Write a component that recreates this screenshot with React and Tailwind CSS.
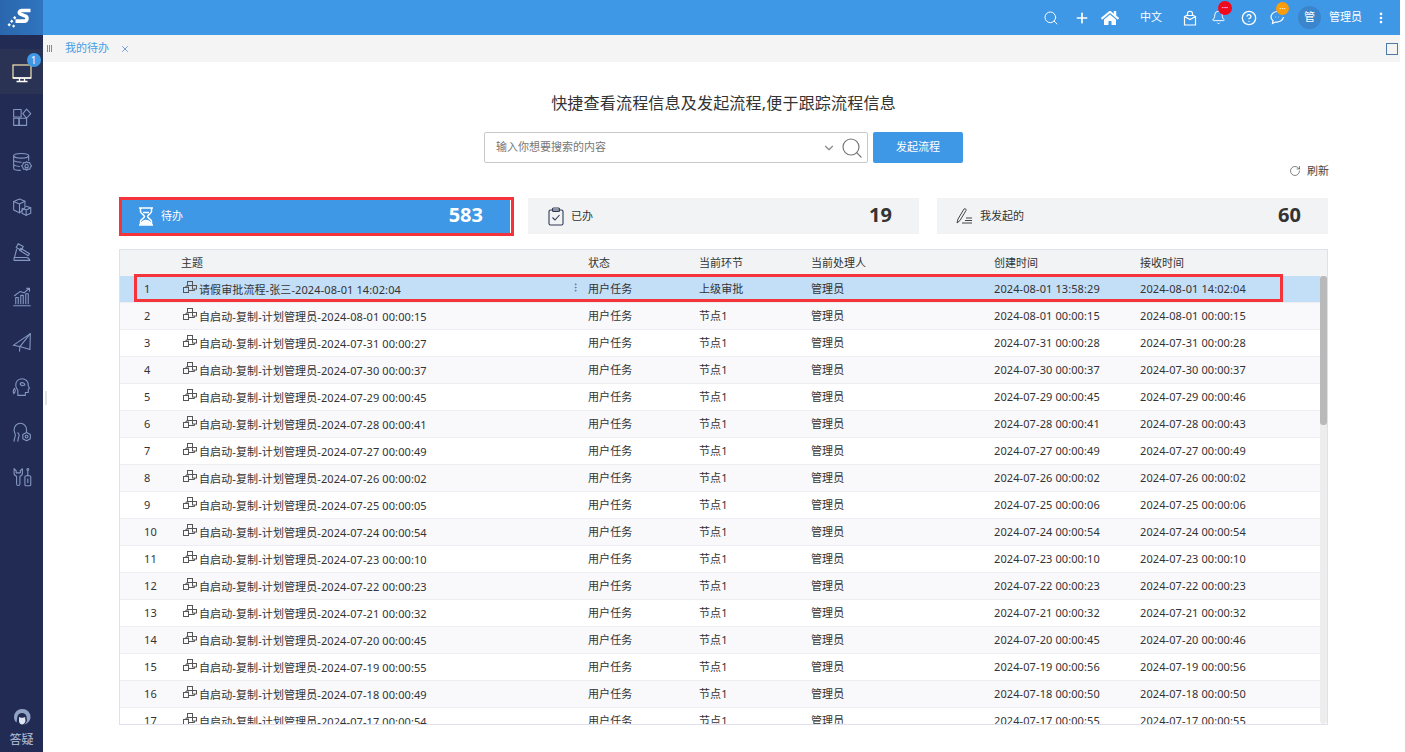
import { Search, Plus, Bell, CircleHelp, RotateCw, ChevronDown, EllipsisVertical, X } from "lucide-react";
import { FaHome } from "react-icons/fa";

const rows = [
	[1, "请假审批流程-张三-2024-08-01 14:02:04", "上级审批", "2024-08-01 13:58:29", "2024-08-01 14:02:04"],
	[2, "自启动-复制-计划管理员-2024-08-01 00:00:15", "节点1", "2024-08-01 00:00:15", "2024-08-01 00:00:15"],
	[3, "自启动-复制-计划管理员-2024-07-31 00:00:27", "节点1", "2024-07-31 00:00:28", "2024-07-31 00:00:28"],
	[4, "自启动-复制-计划管理员-2024-07-30 00:00:37", "节点1", "2024-07-30 00:00:37", "2024-07-30 00:00:37"],
	[5, "自启动-复制-计划管理员-2024-07-29 00:00:45", "节点1", "2024-07-29 00:00:45", "2024-07-29 00:00:46"],
	[6, "自启动-复制-计划管理员-2024-07-28 00:00:41", "节点1", "2024-07-28 00:00:41", "2024-07-28 00:00:43"],
	[7, "自启动-复制-计划管理员-2024-07-27 00:00:49", "节点1", "2024-07-27 00:00:49", "2024-07-27 00:00:49"],
	[8, "自启动-复制-计划管理员-2024-07-26 00:00:02", "节点1", "2024-07-26 00:00:02", "2024-07-26 00:00:02"],
	[9, "自启动-复制-计划管理员-2024-07-25 00:00:05", "节点1", "2024-07-25 00:00:06", "2024-07-25 00:00:06"],
	[10, "自启动-复制-计划管理员-2024-07-24 00:00:54", "节点1", "2024-07-24 00:00:54", "2024-07-24 00:00:54"],
	[11, "自启动-复制-计划管理员-2024-07-23 00:00:10", "节点1", "2024-07-23 00:00:10", "2024-07-23 00:00:10"],
	[12, "自启动-复制-计划管理员-2024-07-22 00:00:23", "节点1", "2024-07-22 00:00:23", "2024-07-22 00:00:23"],
	[13, "自启动-复制-计划管理员-2024-07-21 00:00:32", "节点1", "2024-07-21 00:00:32", "2024-07-21 00:00:32"],
	[14, "自启动-复制-计划管理员-2024-07-20 00:00:45", "节点1", "2024-07-20 00:00:45", "2024-07-20 00:00:46"],
	[15, "自启动-复制-计划管理员-2024-07-19 00:00:55", "节点1", "2024-07-19 00:00:56", "2024-07-19 00:00:56"],
	[16, "自启动-复制-计划管理员-2024-07-18 00:00:49", "节点1", "2024-07-18 00:00:50", "2024-07-18 00:00:50"],
	[17, "自启动-复制-计划管理员-2024-07-17 00:00:54", "节点1", "2024-07-17 00:00:55", "2024-07-17 00:00:55"],
];

const navIcons = [
	<g>
		<rect x="2" y="3" width="9" height="9" />
		<rect x="2" y="13.500" width="6.500" height="8.500" />
		<rect x="8.500" y="13.500" width="9" height="8.500" />
		<path d="M17.500 2.500l5 5.500-5 5.500-4.500-5.500z" />
	</g>,
	<g>
		<ellipse cx="11" cy="4.500" rx="9" ry="2.800" />
		<path d="M2 4.500v15c0 1.500 3.500 2.500 8 2.500M20 4.500v5.500M2 10c1.500 1.500 5 2.200 9 2.200M2 15.500c1.500 1 4 1.600 7 1.800" />
		<circle cx="17.500" cy="17" r="2" />
		<path d="M17.500 11.500l1.500 1.500 2.300-.3.700 2.300 1.500 1.700-1.500 1.700-.7 2.300-2.300-.3-1.500 1.500-1.500-1.500-2.300.3-.7-2.300-1.500-1.700 1.500-1.700.7-2.300 2.300.3z" />
	</g>,
	<g>
		<path d="M9 2.500l6.500 2.500v8l-6.500 6-7-3.500v-10z" />
		<path d="M2 5.500l7 3 6.500-3.500M9 8.500v10.500" />
		<path d="M17 11l5.500 2v6.500l-5.500 2.500-5-2.500v-4.500" />
		<path d="M12 13.500l5 2 5.500-2.500M17 15.500v6.500" />
	</g>,
	<g>
		<path d="M7.500 2l6 3.500-2.500 4.500-6-3.500z" />
		<path d="M10.500 7.500l10.500 6.500-1.500 2.500-10.500-6.500z" />
		<path d="M5.500 9l-2.500 9.500" />
		<path d="M2.500 22v-3.500h15c2 0 3 1 4 3.500z" />
	</g>,
	<g>
		<path d="M2 22.500h20M4.500 20v-7.500h3v7.500M10.500 20v-10h3v10M16.500 20v-12h3v12" />
		<path d="M3 10.500l6.500-5 5 1.500 6-5.500M17.500 1.500h3.500v3.500" />
	</g>,
	<g>
		<path d="M22 2l-20.500 14 8 1.500 12 3.500z" />
		<path d="M22 2l-12.500 15.500-.5 5.500" />
	</g>,
	<g>
		<path d="M7 22h9v-3.500h3.500v-4l1.500-1c-.5-1-1-2-1.500-3 .5-5-3.200-8.500-7.500-8.500-5.500 0-8 4.500-7.500 8.500.2 2 1.500 4 2.500 5.500z" />
		<path d="M10 7.500c2-1.500 5-.5 5.500 2l-3.500 1-2-1.500z" />
		<path d="M3 13.500c-1.300 1.500-2 4-.8 6.500 1.500-1.500 2.200-4 .8-6.500z" />
	</g>,
	<g>
		<path d="M2.500 23c0-3 1.500-4.500 1.500-7.500 0-2-1.500-3-1.500-6 0-4.500 3.500-8 7.500-8s7.500 3.500 7.500 8c0 1 0 1.500-.3 2.500" />
		<path d="M7 23c0-3 1.500-4.500 1.500-7.500 0-1-1-1.500-1.500-2.500" />
		<path d="M17.500 12.500l4.500 2.500v5l-4.500 2.500-4.500-2.500v-5z" />
		<circle cx="17.500" cy="17.500" r="1.700" />
	</g>,
	<g>
		<path d="M2.500 2v5.500c0 1.700 1.200 3 3 3.500v9c0 3 4 3 4 0v-9c1.800-.5 3-1.800 3-3.500v-5.500l-2.500 2.500v2.500h-5v-2.500z" />
		<rect x="15.500" y="10.500" width="7" height="12" rx="1.300" />
		<path d="M19 10.500v-6M19 14.500v4" />
		<circle cx="19" cy="3" r="1.100" />
	</g>,
];

function NavIcon({ children }) {
	return (
		<div className="flex h-[45px] items-center justify-center">
			<svg width="20" height="20" viewBox="0 0 24 24" fill="none" stroke="#8599c0" strokeWidth="1.300" strokeLinejoin="round" strokeLinecap="round">
				{children}
			</svg>
		</div>
	);
}

function FlowIcon() {
	return (
		<svg width="14" height="13" viewBox="0 0 14 13" fill="none" stroke="#555" strokeWidth="1" className="shrink-0">
			<rect x="4.500" y="0.500" width="5" height="4" />
			<rect x="0.500" y="6.500" width="5" height="5" />
			<rect x="9.500" y="4.500" width="4" height="3.500" />
			<path d="M5.500 9.500h6v-1.500M3 6.500v-1.500h3v-.5" />
		</svg>
	);
}

function Sidebar() {
	return (
		<aside className="flex w-[43px] shrink-0 flex-col bg-[#222b54]">
			<div className="h-[35px] bg-gradient-to-r from-[#2a66ad] to-[#2f75bf]">
				<svg width="43" height="35" viewBox="0 0 43 35">
					<path d="M30.500 10.500h-9c-2 0-3 2.600-1 3.600l5 2c2.500 1.200 1.500 5-1 5h-9" fill="none" stroke="#fff" strokeWidth="3.600" />
					<rect x="13.500" y="16.500" width="2.400" height="2.400" fill="#fff" transform="rotate(45 14.700 17.700)" />
					<rect x="10.500" y="20" width="2.400" height="2.400" fill="#fff" transform="rotate(45 11.700 21.200)" />
					<rect x="8" y="23.500" width="2.400" height="2.400" fill="#fff" transform="rotate(45 9.200 24.700)" />
					<rect x="12.500" y="25" width="2.200" height="2.200" fill="#fff" transform="rotate(45 13.600 26.100)" />
				</svg>
			</div>
			<div className="mt-[14px] flex h-[45px] items-center justify-center bg-[#2a3353]">
				<div className="relative">
					<svg width="20" height="19" viewBox="0 0 20 19" fill="none" strokeWidth="1.300" className="mt-[3px]">
						<rect x="1" y="1" width="18" height="13" stroke="#e8d9a8" />
						<path d="M1 14h18M7.500 14v3M12.500 14v3M4.500 17.500h11" stroke="#fff" />
					</svg>
					<span className="absolute -top-[8px] -right-[9px] flex h-[14px] w-[14px] items-center justify-center rounded-full bg-[#3f98e6] text-[10px] leading-none text-white">
						1
					</span>
				</div>
			</div>
			{navIcons.map((icon, i) => (
				<NavIcon key={i}>{icon}</NavIcon>
			))}
			<div className="mt-auto flex flex-col items-center pb-[4px]">
				<svg width="18" height="18" viewBox="0 0 18 18" fill="#8fa2c4">
					<path d="M9 1a8 8 0 0 0-8 8c0 2.500 1 4.500 2.500 5.500l1-6c.5-2 2-3.500 4.500-3.500s4 1.500 4.500 3.500l.5 4c-.5 2-1.500 3-3 4 3-.5 6.500-3.500 6.500-7.500a8 8 0 0 0-8-8z" />
					<path d="M6 9c1 1 5 1 6 0l.5 4c-.5 2-2 3.500-3.500 3.500s-3-1.500-3-3.500z" fill="#dfe5f0" />
				</svg>
				<span className="mt-[6px] text-[12px] leading-[16px] font-medium text-[#a5b0c8]">答疑</span>
			</div>
		</aside>
	);
}

function TopBar() {
	return (
		<header className="flex h-[35px] items-center bg-[#3f98e6] text-white">
			<Search size={16} strokeWidth={1.500} className="ml-auto" />
			<Plus size={16} strokeWidth={2.500} className="ml-[15px]" />
			<FaHome size={18} className="ml-[11px]" />
			<span className="ml-[21px] text-[11px]">中文</span>
			<svg width="14" height="16" viewBox="0 0 14 16" fill="none" stroke="#fff" strokeWidth="1.200" className="ml-[21px]">
				<path d="M1.500 6.500l2-1h7l2 1v8.500h-11zM4.500 5.500v-2c0-3 5-3 5 0v2M1.500 6.500l5.500 3 5.500-3" />
			</svg>
			<div className="relative ml-[14px]">
				<Bell size={15} strokeWidth={1.500} />
				<span className="absolute -top-[9px] left-[7px] flex h-[14px] w-[14px] items-center justify-center rounded-full bg-[#f10a1c] text-[8px] leading-none">
					···
				</span>
			</div>
			<CircleHelp size={16} strokeWidth={2} className="ml-[15px]" />
			<div className="relative ml-[13px]">
				<svg width="15" height="15" viewBox="0 0 15 15" fill="none" stroke="#fff" strokeWidth="1.200">
					<path d="M7.500 1.500c-3.500 0-6.500 2.500-6.500 5.500 0 1.500.8 2.800 2 3.700l-.5 2.800 3-1.500c3.500.6 7.500-1.500 8-5" />
					<path d="M5 7h.5M8 7h.5" />
				</svg>
				<span className="absolute -top-[8px] left-[6px] flex h-[13px] w-[13px] items-center justify-center rounded-full bg-[#fb9c0b] text-[8px] leading-none">
					···
				</span>
			</div>
			<span className="ml-[13px] flex h-[23px] w-[23px] items-center justify-center rounded-full bg-[#3a85cb] text-[11px]">
				管
			</span>
			<span className="ml-[8px] text-[11px]">管理员</span>
			<EllipsisVertical size={14} strokeWidth={2.500} className="mr-[12px] ml-[12px]" />
		</header>
	);
}

function TabBar() {
	return (
		<div className="flex h-[27px] items-center bg-[#f4f4f4]">
			<div className="ml-[4px] flex gap-[1px]">
				<span className="h-[7px] w-[1px] bg-[#888]" />
				<span className="h-[7px] w-[1px] bg-[#888]" />
				<span className="h-[7px] w-[1px] bg-[#888]" />
			</div>
			<span className="ml-[13px] text-[11px] text-[#4a9be6]">我的待办</span>
			<X size={10} strokeWidth={2} className="ml-[11px] text-[#5b8fd0]" />
			<span className="mr-[2px] ml-auto h-[12px] w-[12px] border border-[#4c79a8]" />
		</div>
	);
}

function SearchBar() {
	return (
		<div className="mt-[17px] flex justify-center gap-[5px]">
			<div className="flex h-[31px] w-[384px] items-center rounded-[2px] border border-[#c8c8c8] pr-[3px] pl-[11px]">
				<span className="text-[11px] text-[#777]">输入你想要搜索的内容</span>
				<ChevronDown size={14} strokeWidth={2} className="ml-auto text-[#888]" />
				<Search size={24} strokeWidth={1.200} className="ml-[4px] text-[#777]" />
			</div>
			<button className="h-[31px] w-[90px] rounded-[2px] bg-[#3f98e6] text-[11px] text-white">发起流程</button>
		</div>
	);
}

function StatCard({ icon, label, count, active }) {
	return (
		<div className={`flex h-[36px] items-center pr-[27px] pl-[19px] ${active ? "bg-[#3f98e6] text-white" : "bg-[#f2f3f5] text-[#333]"}`}>
			{icon}
			<span className="ml-[7px] text-[11px]">{label}</span>
			<span className="ml-auto -mt-[2px] text-[20px] leading-none font-bold">{count}</span>
		</div>
	);
}

function Table() {
	const cols = "grid grid-cols-[61px_407px_111px_112px_183px_146px_1fr] items-center";
	return (
		<div className="relative mt-[15px] h-[476px] w-[1209px] border border-[#dfdfee]">
			<div className={`${cols} h-[26px] bg-[#f2f3f5] text-[11px] text-[#333]`}>
				<span />
				<span>主题</span>
				<span>状态</span>
				<span>当前环节</span>
				<span>当前处理人</span>
				<span>创建时间</span>
				<span>接收时间</span>
			</div>
			<div className="flex h-[448px] overflow-hidden">
				<div className="flex-1">
					{rows.map((r, i) => (
						<div
							key={r[0]}
							className={`${cols} h-[27px] shrink-0 border-b border-[#eeeef2] text-[11px] tracking-[0.1px] text-[#333] ${
								i === 0 ? "bg-[#c3def7]" : i % 2 === 1 ? "bg-[#f9f9fc]" : "bg-white"
							}`}
						>
							<span>
								<span className="pl-[24px]">{r[0]}</span>
							</span>
							<div className="flex items-center">
								<span className="-mt-[3px] ml-[2px]">
									<FlowIcon />
								</span>
								<span className="ml-[2px] whitespace-nowrap pt-[2px]">{r[1]}</span>
								{i === 0 && <EllipsisVertical size={11} strokeWidth={2} className="mr-[7px] ml-auto -mt-[3px] text-[#5a7a9a]" />}
							</div>
							<span>用户任务</span>
							<span>{r[2]}</span>
							<span>管理员</span>
							<span className="whitespace-nowrap">{r[3]}</span>
							<span className="whitespace-nowrap">{r[4]}</span>
						</div>
					))}
				</div>
				<div className="w-[7px] shrink-0 rounded-b bg-[#ededed]">
					<div className="h-[149px] rounded-[3px] bg-[#b9b9b9]" />
				</div>
			</div>
			<div className="pointer-events-none absolute top-[24px] left-[14px] h-[28px] w-[1149px] border-[3px] border-[#f4343a]" />
		</div>
	);
}

export default function App() {
	return (
		<div className="h-[752px] w-[1400px] overflow-hidden bg-white font-['Noto_Sans','Noto_Sans_CJK_SC',sans-serif] text-[#333]">
			<div className="relative flex h-full">
				<Sidebar />
				<div className="flex min-w-0 flex-1 flex-col">
					<TopBar />
					<TabBar />
					<main className="flex flex-col pr-[72px] pl-[76px]">
						<h1 className="mt-[29px] text-center text-[16px] leading-[24px] font-normal tracking-[0.2px] text-[#333]">
							快捷查看流程信息及发起流程,便于跟踪流程信息
						</h1>
						<SearchBar />
						<div className="-mr-[1px] flex h-[16px] items-center justify-end gap-[6px] text-[11px] text-[#444]">
							<RotateCw size={12} strokeWidth={1.300} />
							<span>刷新</span>
						</div>
						<div className="relative mt-[19px] grid w-[1209px] grid-cols-3 gap-[18px]">
							<StatCard
								active
								label="待办"
								count="583"
								icon={
									<svg width="16" height="19" viewBox="0 0 16 19" fill="none" stroke="#fff" strokeWidth="1.500">
										<path d="M1 1h14M1 18h14M2.500 1v3.500c0 2 4 3.500 4 5s-4 3-4 5v3.500M13.500 1v3.500c0 2-4 3.500-4 5s4 3 4 5v3.500" />
										<path d="M3.500 16c2-3.500 7-3.500 9 0v1h-9z" fill="#fff" />
										<path d="M5 5.500h6" />
									</svg>
								}
							/>
							<StatCard
								label="已办"
								count="19"
								icon={
									<svg width="16" height="19" viewBox="0 0 16 19" fill="none" stroke="#2f3a55" strokeWidth="1.100" className="ml-[1px]">
										<rect x="1" y="3" width="14" height="15" rx="1.500" />
										<rect x="4.500" y="1" width="7" height="3.500" rx="1" />
										<path d="M4.500 10.500l2.500 2.500 4.500-5" />
									</svg>
								}
							/>
							<StatCard
								label="我发起的"
								count="60"
								icon={
									<svg width="17" height="16" viewBox="0 0 17 16" fill="none" stroke="#444" strokeWidth="1">
										<path d="M1 15l1-4 6-10c1-.8 2.500 0 2 1.500l-6 10zM10 10h6M9 12.500h7M6 15h10" />
									</svg>
								}
							/>
							<div className="pointer-events-none absolute -top-[1px] left-0 h-[39px] w-[395px] border-[3px] border-[#f4343a]" />
						</div>
						<Table />
					</main>
				</div>
				<div className="absolute top-[391px] left-[45px] h-[14px] w-[2px] bg-[#e2e2e2]" />
			</div>
		</div>
	);
}
